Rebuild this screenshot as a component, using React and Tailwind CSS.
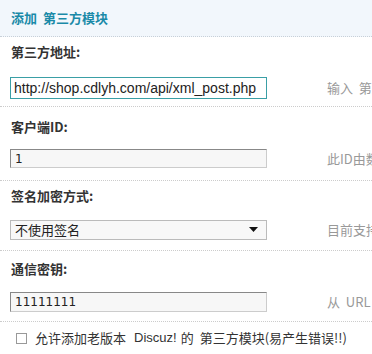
export default function App() {
  const cjk = { fontFamily: '"Noto Sans CJK SC", "Noto Sans", sans-serif' };
  return (
    <div className="w-[372px] h-[354px] overflow-hidden bg-white text-[#333]" style={cjk}>
      <div className="h-[37px] bg-[#f2f7fc] border-b border-dotted border-[#c8d0d8] flex items-center pl-[11px]">
        <span className="text-[13px] font-bold text-[#1a8aa8] leading-[16px]">添加&nbsp;&nbsp;第三方模块</span>
      </div>

      {/* Row 1 */}
      <div className="border-b border-dotted border-[#ccc] pb-[7px]">
        <div className="pt-[7px] pl-[11px] text-[13px] font-bold leading-[16px]">第三方地址:</div>
        <div className="mt-[17px] flex items-center">
          <div className="ml-[10px] w-[257px] shrink-0 h-[22px] border border-[#3a9fa6] bg-white flex items-center pl-[3px] overflow-hidden">
            <span className="text-[14px] text-[#222] whitespace-nowrap" style={{ fontFamily: '"Liberation Sans", Arial, sans-serif' }}>http://shop.cdlyh.com/api/xml_post.php</span>
          </div>
          <span className="ml-[60px] shrink-0 text-[13px] text-[#999] whitespace-nowrap">输入&nbsp;&nbsp;第三方模块的接口地址</span>
        </div>
      </div>

      {/* Row 2 */}
      <div className="border-b border-dotted border-[#ccc] pb-[11px]">
        <div className="pt-[12px] pl-[11px] text-[13px] font-bold leading-[16px]">客户端ID:</div>
        <div className="mt-[14px] flex items-center">
          <div className="ml-[10px] w-[257px] shrink-0 h-[19px] border border-t-[#888] border-l-[#888] border-r-[#ccc] border-b-[#ccc] bg-[#f7f7f7] flex items-center pl-[4px]">
            <span className="text-[12px] text-[#222]" style={{ fontFamily: '"DejaVu Sans", Verdana, sans-serif' }}>1</span>
          </div>
          <span className="ml-[60px] shrink-0 text-[13px] text-[#999] whitespace-nowrap">此ID由数据提供方分配</span>
        </div>
      </div>

      {/* Row 3 */}
      <div className="border-b border-dotted border-[#ccc] pb-[10px]">
        <div className="pt-[7px] pl-[11px] text-[13px] font-bold leading-[16px]">签名加密方式:</div>
        <div className="mt-[16px] flex items-center">
          <div className="ml-[10px] w-[257px] shrink-0 h-[20px] border border-[#bbb] bg-[#f8f8f8] flex items-center pl-[4px] pr-[8px] justify-between">
            <span className="text-[13px] text-[#222]">不使用签名</span>
            <svg width="9" height="5" viewBox="0 0 9 5"><path d="M0 0H9L4.5 5Z" fill="#111" /></svg>
          </div>
          <span className="ml-[60px] shrink-0 text-[13px] text-[#999] whitespace-nowrap">目前支持的签名方式</span>
        </div>
      </div>

      {/* Row 4 */}
      <div className="border-b border-dotted border-[#ccc] pb-[9px]">
        <div className="pt-[10px] pl-[11px] text-[13px] font-bold leading-[16px]">通信密钥:</div>
        <div className="mt-[15px] flex items-center">
          <div className="ml-[10px] w-[257px] shrink-0 h-[20px] border border-t-[#888] border-l-[#888] border-r-[#ccc] border-b-[#ccc] bg-[#f7f7f7] flex items-center pl-[4px]">
            <span className="text-[12px] text-[#222]" style={{ fontFamily: '"DejaVu Sans", Verdana, sans-serif' }}>11111111</span>
          </div>
          <span className="ml-[60px] shrink-0 text-[13px] text-[#999] whitespace-nowrap">从&nbsp;&nbsp;URL 获取</span>
        </div>
      </div>

      {/* Checkbox */}
      <div className="h-[33px] flex items-center pl-[16px] text-[13px] text-[#333] whitespace-nowrap">
        <div className="w-[11px] h-[11px] shrink-0 border border-[#999] bg-white" />
        <span className="ml-[8px]">允许添加老版本</span>
        <span className="ml-[8px]" style={{ fontFamily: '"Liberation Sans", Arial, sans-serif' }}>Discuz!</span>
        <span className="ml-[4px]">的</span>
        <span className="ml-[6px]">第三方模块(易产生错误!!)</span>
      </div>
    </div>
  );
}
